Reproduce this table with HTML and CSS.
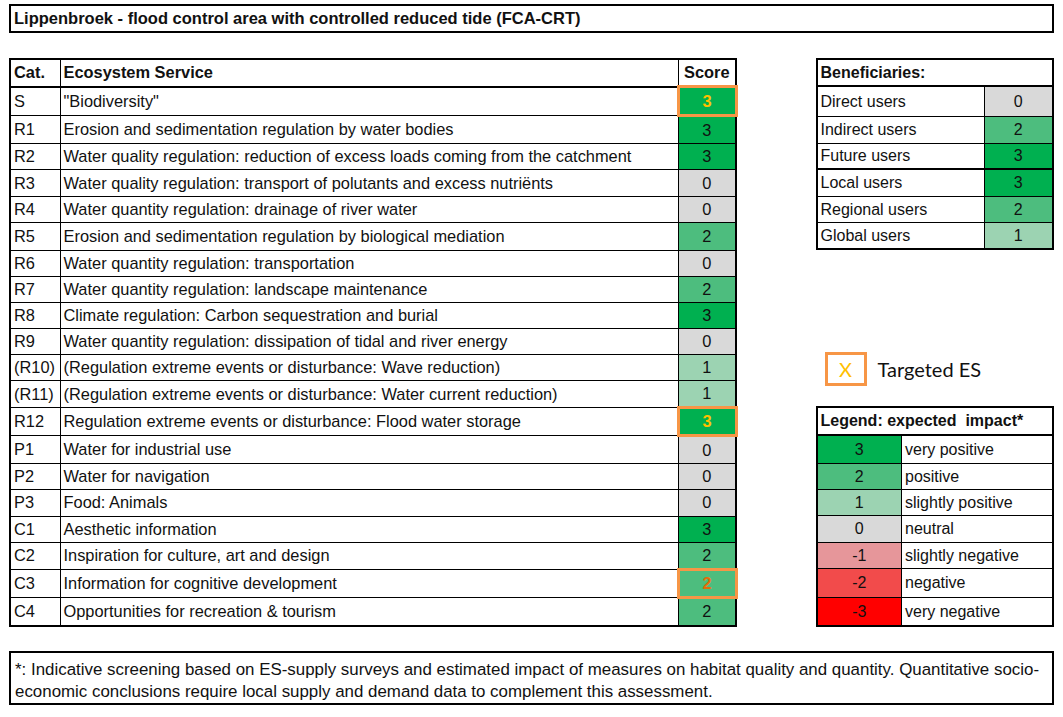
FILE: index.html
```html
<!DOCTYPE html>
<html>
<head>
<meta charset="utf-8">
<link rel="stylesheet" href="styles.css">
</head>
<body>
<div class="page">
  <div class="title">Lippenbroek - flood control area with controlled reduced tide (FCA-CRT)</div>
  <div class="middle">
    <table class="es">
      <colgroup><col class="c-cat"><col class="c-svc"><col class="c-score"></colgroup>
      <thead>
        <tr class="head"><th>Cat.</th><th>Ecosystem Service</th><th class="score">Score</th></tr>
      </thead>
      <tbody>
        <tr class="h26"><td>S</td><td>"Biodiversity"</td><td class="score v3 target yellow">3</td></tr>
        <tr class="h26"><td>R1</td><td>Erosion and sedimentation regulation by water bodies</td><td class="score v3">3</td></tr>
        <tr><td>R2</td><td>Water quality regulation: reduction of excess loads coming from the catchment</td><td class="score v3">3</td></tr>
        <tr class="h26"><td>R3</td><td>Water quality regulation: transport of polutants and excess nutriënts</td><td class="score v0">0</td></tr>
        <tr><td>R4</td><td>Water quantity regulation: drainage of river water</td><td class="score v0">0</td></tr>
        <tr class="h26"><td>R5</td><td>Erosion and sedimentation regulation by biological mediation</td><td class="score v2">2</td></tr>
        <tr><td>R6</td><td>Water quantity regulation: transportation</td><td class="score v0">0</td></tr>
        <tr><td>R7</td><td>Water quantity regulation: landscape maintenance</td><td class="score v2">2</td></tr>
        <tr><td>R8</td><td>Climate regulation: Carbon sequestration and burial</td><td class="score v3">3</td></tr>
        <tr><td>R9</td><td>Water quantity regulation: dissipation of tidal and river energy</td><td class="score v0">0</td></tr>
        <tr><td>(R10)</td><td>(Regulation extreme events or disturbance: Wave reduction)</td><td class="score v1">1</td></tr>
        <tr><td>(R11)</td><td>(Regulation extreme events or disturbance: Water current reduction)</td><td class="score v1">1</td></tr>
        <tr><td>R12</td><td>Regulation extreme events or disturbance: Flood water storage</td><td class="score v3 target yellow">3</td></tr>
        <tr class="h26"><td>P1</td><td>Water for industrial use</td><td class="score v0">0</td></tr>
        <tr><td>P2</td><td>Water for navigation</td><td class="score v0">0</td></tr>
        <tr><td>P3</td><td>Food: Animals</td><td class="score v0">0</td></tr>
        <tr><td>C1</td><td>Aesthetic information</td><td class="score v3">3</td></tr>
        <tr><td>C2</td><td>Inspiration for culture, art and design</td><td class="score v2">2</td></tr>
        <tr><td>C3</td><td>Information for cognitive development</td><td class="score v2 target orange">2</td></tr>
        <tr class="h26"><td>C4</td><td>Opportunities for recreation &amp; tourism</td><td class="score v2">2</td></tr>
      </tbody>
    </table>

    <div class="side">
      <table class="ben">
        <colgroup><col class="c-blabel"><col class="c-bval"></colgroup>
        <tr class="head"><th colspan="2">Beneficiaries:</th></tr>
        <tr class="h29"><td>Direct users</td><td class="score v0">0</td></tr>
        <tr class="h26"><td>Indirect users</td><td class="score v2">2</td></tr>
        <tr class="thick"><td>Future users</td><td class="score v3">3</td></tr>
        <tr class="h26"><td>Local users</td><td class="score v3">3</td></tr>
        <tr><td>Regional users</td><td class="score v2">2</td></tr>
        <tr><td>Global users</td><td class="score v1">1</td></tr>
      </table>

      <div class="targeted">
        <div class="xbox">X</div>
        <div class="tlabel">Targeted ES</div>
      </div>

      <table class="legend">
        <colgroup><col class="c-lval"><col class="c-llabel"></colgroup>
        <tr class="head h26"><th colspan="2">Legend: expected&nbsp; impact*</th></tr>
        <tr class="h27"><td class="score v3">3</td><td>very positive</td></tr>
        <tr><td class="score v2">2</td><td>positive</td></tr>
        <tr><td class="score v1">1</td><td>slightly positive</td></tr>
        <tr class="h26"><td class="score v0">0</td><td>neutral</td></tr>
        <tr><td class="score vm1">-1</td><td>slightly negative</td></tr>
        <tr class="h28"><td class="score vm2">-2</td><td>negative</td></tr>
        <tr class="h27"><td class="score vm3">-3</td><td>very negative</td></tr>
      </table>
    </div>
  </div>

  <div class="footer">*: Indicative screening based on ES-supply surveys and estimated impact of measures on habitat quality and quantity. Quantitative socio-economic conclusions require local supply and demand data to complement this assessment.</div>
</div>
</body>
</html>
```

FILE: styles.css
```css
html, body {
  margin: 0;
  padding: 0;
  background: #ffffff;
}

body {
  font-family: "Liberation Sans", Arial, sans-serif;
  font-size: 16px;
  color: #111;
}

.page {
  padding: 4px 0 0 9px;
  width: 1045px;
}

.title {
  box-sizing: border-box;
  height: 29px;
  border: 2px solid #000;
  font-weight: bold;
  font-size: 16.5px;
  line-height: 25px;
  padding-left: 3px;
}

.middle {
  display: flex;
  margin-top: 25px;
}

table {
  border-collapse: collapse;
  table-layout: fixed;
}

th, td {
  border: 1px solid #000;
  padding: 0 0 0 3px;
  height: 25px;
  white-space: nowrap;
  overflow: hidden;
  text-align: left;
}

th {
  font-weight: bold;
}

.es {
  width: 726px;
  border: 2px solid #000;
  font-size: 16.4px;
}

.es .head th {
  border-bottom: 2px solid #000;
}

.c-cat { width: 50px; }
.c-svc { width: 618px; }
.c-score { width: 58px; }

tr.h26 > td, tr.h26 > th { height: 26px; }
tr.h27 > td, tr.h27 > th { height: 27px; }
tr.h28 > td, tr.h28 > th { height: 28px; }
tr.h29 > td, tr.h29 > th { height: 29px; }

.score {
  text-align: center;
  padding: 0;
}

.v3 { background: #00b050; }
.v2 { background: #4dbd7e; }
.v1 { background: #9cd3b2; }
.v0 { background: #d9d9d9; }
.vm1 { background: #e6969a; }
.vm2 { background: #f24b4b; }
.vm3 { background: #ff0000; }

td.target {
  border: 3px solid #f79646;
  font-weight: bold;
}

.yellow { color: #ffc000; }
.orange { color: #e46c0a; }

.side {
  margin-left: 78px;
  display: flex;
  flex-direction: column;
}

.ben, .legend {
  width: 236px;
  border: 2px solid #000;
}

.ben .head th, .legend .head th {
  border-bottom: 2px solid #000;
}

.c-blabel { width: 168px; }
.c-bval { width: 68px; }

.ben tr.thick td {
  height: 24px;
  border-bottom: 2px solid #000;
}

.c-lval { width: 85px; }
.c-llabel { width: 151px; }

.targeted {
  display: flex;
  align-items: center;
  margin-top: 102px;
  margin-left: 9px;
  height: 34px;
}

.xbox {
  box-sizing: border-box;
  width: 42px;
  height: 34px;
  border: 3px solid #f79646;
  color: #ffc000;
  font-family: Lato, "Open Sans", sans-serif;
  font-size: 20px;
  display: flex;
  align-items: center;
  justify-content: center;
}

.tlabel {
  margin-left: 11px;
  font-family: Lato, "Open Sans", sans-serif;
  font-size: 20px;
  color: #111;
}

.legend {
  margin-top: 20px;
}

.footer {
  box-sizing: border-box;
  margin-top: 24px;
  height: 54px;
  border: 2px solid #000;
  padding: 6px 8px 0 4px;
  font-size: 16.9px;
  line-height: 22px;
}
```
